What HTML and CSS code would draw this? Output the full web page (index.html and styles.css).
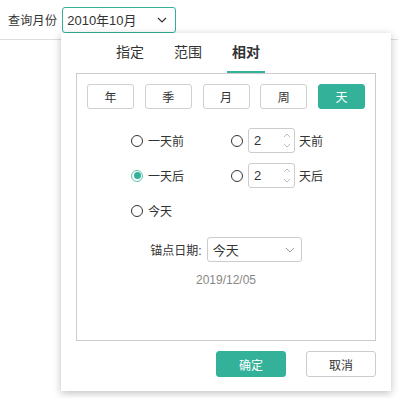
FILE: index.html
```html
<!DOCTYPE html>
<html lang="zh">
<head>
  <meta charset="UTF-8" />
  <title>查询月份</title>
  <link rel="stylesheet" href="styles.css">
</head>
<body>
  <!-- Toolbar -->
  <div class="toolbar">
    <span class="query-label">查询月份</span>
    <div class="month-select">
      <span>2010年10月</span>
      <svg class="chevron" width="10" height="6" viewBox="0 0 10 6"><path d="M1 1l4 4 4-4" fill="none" stroke="#333" stroke-width="1.2"/></svg>
    </div>
  </div>

  <!-- Date popup -->
  <div class="popup">
    <div class="tabs">
      <span class="tab">指定</span>
      <span class="tab">范围</span>
      <span class="tab active">相对</span>
    </div>

    <div class="panel">
      <div class="units">
        <button class="unit">年</button>
        <button class="unit">季</button>
        <button class="unit">月</button>
        <button class="unit">周</button>
        <button class="unit selected">天</button>
      </div>

      <div class="options">
        <label class="option"><span class="radio"></span>一天前</label>
        <label class="option">
          <span class="radio"></span>
          <span class="spin"><span>2</span>
            <span class="spin-arrows">
              <svg width="8" height="5" viewBox="0 0 8 5"><path d="M1 4l3-3 3 3" fill="none" stroke="#bbb"/></svg>
              <svg width="8" height="5" viewBox="0 0 8 5"><path d="M1 1l3 3 3-3" fill="none" stroke="#bbb"/></svg>
            </span>
          </span>
          天前
        </label>
        <label class="option"><span class="radio checked"></span>一天后</label>
        <label class="option">
          <span class="radio"></span>
          <span class="spin"><span>2</span>
            <span class="spin-arrows">
              <svg width="8" height="5" viewBox="0 0 8 5"><path d="M1 4l3-3 3 3" fill="none" stroke="#bbb"/></svg>
              <svg width="8" height="5" viewBox="0 0 8 5"><path d="M1 1l3 3 3-3" fill="none" stroke="#bbb"/></svg>
            </span>
          </span>
          天后
        </label>
        <label class="option"><span class="radio"></span>今天</label>
      </div>

      <div class="anchor">
        <span>锚点日期:</span>
        <div class="anchor-select">
          <span>今天</span>
          <svg width="10" height="6" viewBox="0 0 10 6"><path d="M1 1l4 4 4-4" fill="none" stroke="#999" stroke-width="1"/></svg>
        </div>
      </div>
      <div class="anchor-date">2019/12/05</div>
    </div>

    <div class="footer">
      <button class="btn primary">确定</button>
      <button class="btn">取消</button>
    </div>
  </div>
</body>
</html>
```

FILE: styles.css
```css
body {
  margin: 0;
  font-family: "Liberation Sans", "Noto Sans CJK SC", sans-serif;
  font-size: 12px;
  color: #333;
  background: #fff;
}

.toolbar {
  height: 39px;
  border-bottom: 1px solid #ddd;
  display: flex;
  align-items: center;
  padding-left: 8px;
  gap: 5px;
}

.query-label {
  font-size: 12px;
  letter-spacing: 0.3px;
}

.month-select {
  width: 114px;
  height: 26px;
  box-sizing: border-box;
  border: 1px solid #33b199;
  border-radius: 3px;
  display: flex;
  align-items: center;
  justify-content: space-between;
  padding: 0 8px 0 4px;
  font-size: 13px;
}

.popup {
  position: absolute;
  left: 61px;
  top: 33px;
  width: 330px;
  height: 358px;
  background: #fff;
  box-shadow: 0 2px 8px rgba(0, 0, 0, 0.25);
  box-sizing: border-box;
}

.tabs {
  height: 40px;
  display: flex;
  gap: 20px;
  padding-left: 50px;
}

.tab {
  width: 38px;
  text-align: center;
  font-size: 14px;
  line-height: 38px;
  border-bottom: 2px solid transparent;
}

.tab.active {
  font-weight: bold;
  border-bottom-color: #33b199;
}

.panel {
  margin: 0 15px;
  height: 268px;
  border: 1px solid #ccc;
  box-sizing: border-box;
  padding: 10px 10px 0;
}

.units {
  display: flex;
  justify-content: space-between;
}

.unit {
  width: 47px;
  height: 25px;
  border: 1px solid #d0d0d0;
  border-radius: 3px;
  background: #fff;
  font-family: inherit;
  font-size: 12px;
  color: #333;
  padding: 0;
}

.unit.selected {
  background: #33b199;
  border-color: #33b199;
  color: #fff;
}

.options {
  display: grid;
  grid-template-columns: 100px auto;
  grid-auto-rows: 25px;
  row-gap: 10px;
  margin: 19px 0 0 44px;
}

.option {
  display: flex;
  align-items: center;
  font-size: 12px;
}

.radio {
  width: 12px;
  height: 12px;
  box-sizing: border-box;
  border: 1px solid #333;
  border-radius: 50%;
  margin-right: 5px;
  display: inline-flex;
  align-items: center;
  justify-content: center;
}

.radio.checked {
  border-color: #5cc0ab;
}

.radio.checked::after {
  content: "";
  width: 7px;
  height: 7px;
  border-radius: 50%;
  background: #33b199;
}

.spin {
  width: 47px;
  height: 25px;
  box-sizing: border-box;
  border: 1px solid #ccc;
  border-radius: 3px;
  display: flex;
  align-items: center;
  justify-content: space-between;
  padding: 0 3px 0 5px;
  margin-right: 4px;
  font-size: 13px;
}

.spin-arrows {
  display: flex;
  flex-direction: column;
  gap: 5px;
}

.spin-arrows svg {
  display: block;
}

.anchor {
  display: flex;
  align-items: center;
  justify-content: center;
  gap: 5px;
  margin-top: 14px;
}

.anchor-select {
  width: 95px;
  height: 25px;
  box-sizing: border-box;
  border: 1px solid #ccc;
  border-radius: 3px;
  display: flex;
  align-items: center;
  justify-content: space-between;
  padding: 0 6px 0 5px;
  font-size: 13px;
}

.anchor-date {
  margin-top: 10px;
  text-align: center;
  color: #888;
  line-height: 16px;
}

.footer {
  display: flex;
  justify-content: flex-end;
  gap: 20px;
  margin: 10px 15px 0;
}

.btn {
  width: 70px;
  height: 26px;
  border: 1px solid #ccc;
  border-radius: 3px;
  background: #fff;
  font-family: inherit;
  font-size: 12px;
  color: #333;
  padding: 0;
}

.btn.primary {
  background: #33b199;
  border-color: #33b199;
  color: #fff;
}
```
